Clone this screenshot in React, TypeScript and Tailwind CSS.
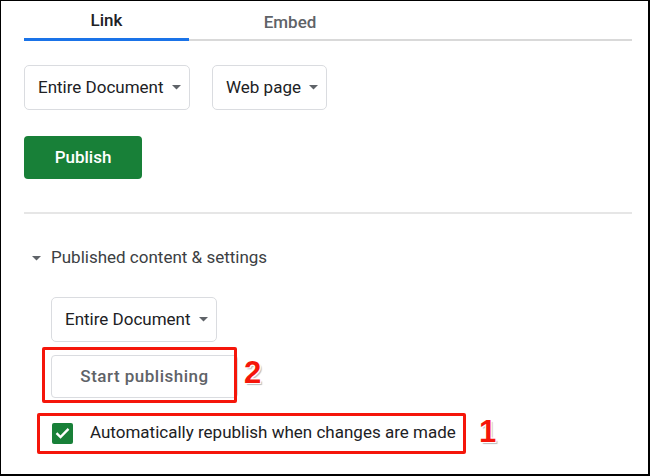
import React from "react";

function Caret({ className = "" }: { className?: string }) {
  return (
    <svg width="9" height="5" viewBox="0 0 9 5" className={`shrink-0 ${className}`}>
      <path d="M0 0 L9 0 L4.5 4.5 Z" fill="#5f6368" />
    </svg>
  );
}

function Dropdown({ label, className = "" }: { label: string; className?: string }) {
  return (
    <div
      className={`h-[45px] flex items-center gap-[8px] pl-[13px] pr-[12px] border border-[#dadce0] rounded-[5px] text-[17px] text-[#202124] whitespace-nowrap ${className}`}
    >
      <span>{label}</span>
      <Caret />
    </div>
  );
}

export default function App() {
  return (
    <div
      className="relative w-[650px] h-[476px] bg-white border-t border-l border-r-2 border-b-2 border-black overflow-hidden"
      style={{ fontFamily: "Roboto, 'Liberation Sans', sans-serif" }}
    >
      <div className="pl-[23px] pr-[16px] flex flex-col">
        {/* Tabs */}
        <div className="flex border-b-2 border-[#d9d9d9] h-[40px]">
          <div className="w-[165px] h-[40px] -mb-[2px] border-b-[3px] border-[#1a73e8] flex items-center justify-center pt-[3px] text-[17px] font-medium text-[#202124]">
            Link
          </div>
          <div className="w-[202px] h-[40px] flex items-center justify-center pt-[3px] text-[17px] font-medium text-[#5f6368]">
            Embed
          </div>
        </div>

        {/* Dropdowns */}
        <div className="flex gap-[22px] mt-[24px]">
          <Dropdown label="Entire Document" className="w-[166px]" />
          <Dropdown label="Web page" className="w-[115px]" />
        </div>

        {/* Publish */}
        <div className="mt-[26px]">
          <button className="h-[43px] w-[118px] rounded-[4px] bg-[#188038] text-white text-[17px] font-medium flex items-center justify-center">
            Publish
          </button>
        </div>

        {/* Divider */}
        <div className="mt-[33px] h-[2px] bg-[#e6e6e6]" />

        {/* Section heading */}
        <div className="mt-[32px] h-[24px] flex items-center">
          <Caret className="ml-[8px]" />
          <span className="ml-[10px] text-[17px] text-[#3c4043] whitespace-nowrap">Published content &amp; settings</span>
        </div>

        {/* Dropdown 3 */}
        <div className="mt-[27px] ml-[27px] flex">
          <Dropdown label="Entire Document" className="w-[166px]" />
        </div>

        {/* Start publishing */}
        <div className="mt-[13px] ml-[27px] flex">
          <button className="h-[43px] w-[187px] border border-[#dadce0] rounded-[4px] bg-white text-[17px] font-medium tracking-[0.5px] text-[#5f6368] flex items-center justify-center whitespace-nowrap">
            Start publishing
          </button>
        </div>

        {/* Checkbox row */}
        <div className="mt-[24px] ml-[28px] h-[22px] flex items-center gap-[17px]">
          <div className="w-[21px] h-[21px] rounded-[2px] bg-[#188038] flex items-center justify-center shrink-0">
            <svg width="15" height="12" viewBox="0 0 15 12">
              <path d="M1.5 6.2 L5.5 10 L13.5 1.8" fill="none" stroke="white" strokeWidth="2.4" />
            </svg>
          </div>
          <span className="text-[17px] text-[#202124] whitespace-nowrap">Automatically republish when changes are made</span>
        </div>
      </div>

      {/* Annotations */}
      <div className="absolute left-[41px] top-[346px] w-[195px] h-[56px] border-[3px] border-[#f5160a] rounded-[2px]" />
      <div
        className="absolute left-[243px] top-[356px] text-[31px] font-bold text-[#f5160a] leading-none [text-shadow:1px_1px_0_#fff,-1px_-1px_0_#fff,1px_-1px_0_#fff,-1px_1px_0_#fff,2px_2px_1px_#bbb]"
        style={{ fontFamily: "'Liberation Sans', Arial, sans-serif" }}
      >
        2
      </div>
      <div className="absolute left-[36px] top-[412px] w-[429px] h-[41px] border-[3px] border-[#f5160a] rounded-[2px]" />
      <div
        className="absolute left-[478px] top-[415px] text-[31px] font-bold text-[#f5160a] leading-none [text-shadow:1px_1px_0_#fff,-1px_-1px_0_#fff,1px_-1px_0_#fff,-1px_1px_0_#fff,2px_2px_1px_#bbb]"
        style={{ fontFamily: "'Liberation Sans', Arial, sans-serif" }}
      >
        1
      </div>
    </div>
  );
}
